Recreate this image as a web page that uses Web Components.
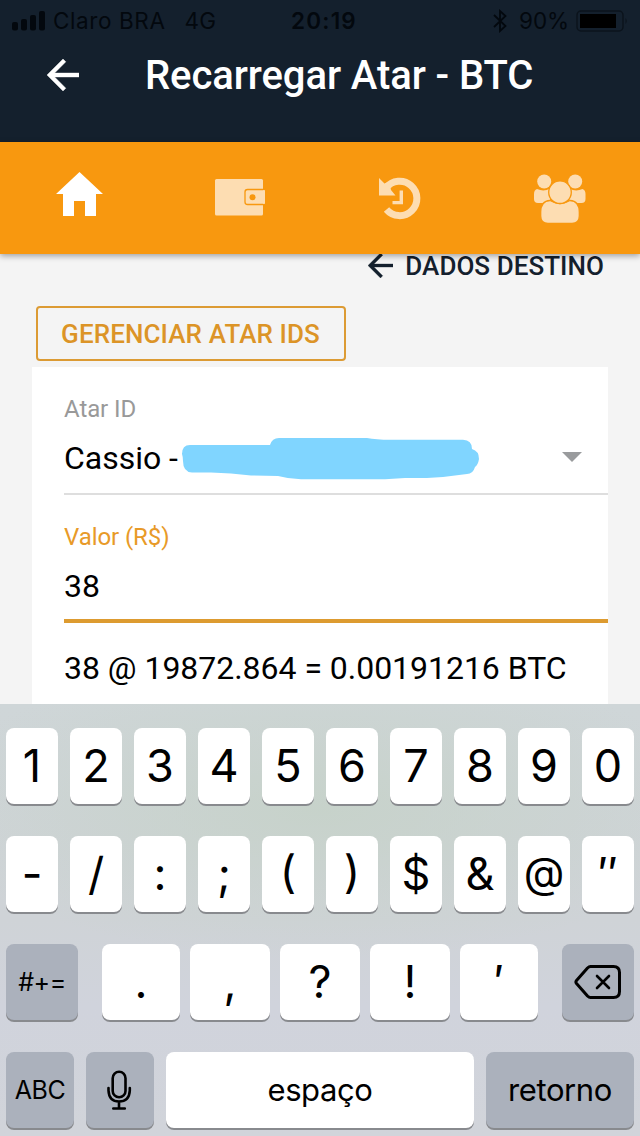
<!DOCTYPE html>
<html lang="pt-BR">
<head>
<meta charset="utf-8">
<title>Recarregar Atar - BTC</title>
<style>
    body {
        margin: 0;
        background: #f4f4f4;
        font-family: Roboto, "Liberation Sans", sans-serif;
    }
</style>
</head>
<body>
<atar-app></atar-app>

<script>
class StatusBar extends HTMLElement {
    constructor() {
        super();
        this.attachShadow({ mode: "open" });
        this.shadowRoot.innerHTML = `
            <style>
                :host {
                    display: grid;
                    grid-template-columns: 1fr auto 1fr;
                    align-items: center;
                    height: 41px;
                    padding: 0 12px 0 12px;
                    box-sizing: border-box;
                    font: 400 22.5px/41px Inter, sans-serif;
                    color: #03080e;
                }
                .left, .right {
                    display: flex;
                    align-items: center;
                }
                .right { justify-content: flex-end; }
                .carrier { margin-left: 8px; letter-spacing: 0.6px; }
                .net { margin-left: 19px; letter-spacing: 0.2px; }
                .time { margin-left: 8px; font-weight: 600; letter-spacing: 1.2px; }
                .level { margin: 0 7px 0 12px; letter-spacing: -0.1px; }
                svg { display: block; }
            </style>
            <div class="left">
                <svg width="33" height="20" viewBox="0 0 33 20" fill="#03080e">
                    <rect x="0" y="11" width="6" height="8.500" rx="2"/>
                    <rect x="9" y="8" width="6" height="11.500" rx="2"/>
                    <rect x="18" y="4" width="6" height="15.500" rx="2"/>
                    <rect x="27" y="0" width="6" height="19.500" rx="2"/>
                </svg>
                <span class="carrier">Claro BRA</span>
                <span class="net">4G</span>
            </div>
            <div class="time">20:19</div>
            <div class="right">
                <svg width="14" height="24" viewBox="0 0 14 24" fill="none" stroke="#03080e" stroke-width="1.800">
                    <path d="M1 6 L12.500 17 L7 22 V2 L12.500 7 L1 18"/>
                </svg>
                <span class="level">90%</span>
                <svg width="52" height="22" viewBox="0 0 52 22">
                    <rect x="1" y="1" width="46" height="20" rx="4" fill="none" stroke="#0b131c" stroke-width="1.500"/>
                    <rect x="4" y="4" width="36" height="14" fill="#000"/>
                    <path d="M49.500 8 v6 q2.500 -3 0 -6z" fill="#0b131c"/>
                </svg>
            </div>
        `;
    }
}
customElements.define("status-bar", StatusBar);

class BackArrow extends HTMLElement {
    constructor() {
        super();
        this.attachShadow({ mode: "open" });
        this.shadowRoot.innerHTML = `
            <style>
                :host { display: block; }
                svg { display: block; width: 100%; height: 100%; }
            </style>
            <svg viewBox="4 4 16 16" fill="currentColor" stroke="currentColor" stroke-width="0.200">
                <path d="M20 11H7.830l5.590-5.590L12 4l-8 8 8 8 1.410-1.410L7.830 13H20v-2z"/>
            </svg>
        `;
    }
}
customElements.define("back-arrow", BackArrow);

class TitleBar extends HTMLElement {
    constructor() {
        super();
        this.attachShadow({ mode: "open" });
        this.shadowRoot.innerHTML = `
            <style>
                :host {
                    display: flex;
                    align-items: center;
                    height: 68px;
                    padding-left: 47px;
                    color: #fff;
                }
                back-arrow { width: 32px; height: 32px; }
                h1 {
                    margin: 2px 0 0 66px;
                    font-size: 40px;
                    font-weight: 500;
                    line-height: 66px;
                    letter-spacing: -0.08px;
                    white-space: nowrap;
                }
            </style>
            <back-arrow></back-arrow>
            <h1><slot></slot></h1>
        `;
    }
}
customElements.define("title-bar", TitleBar);

class TabBar extends HTMLElement {
    constructor() {
        super();
        this.attachShadow({ mode: "open" });
        this.shadowRoot.innerHTML = `
            <style>
                :host {
                    display: flex;
                    position: relative;
                    z-index: 1;
                    height: 112px;
                    background: #f8980f;
                    box-shadow: 0 2px 6px rgba(0, 0, 0, 0.35);
                }
            </style>
            <slot></slot>
        `;
    }
}
customElements.define("tab-bar", TabBar);

const TAB_ICONS = {
    home: `<path d="M27.500 2 L51 24 H44 V46 H33 V31 H22 V46 H11 V24 H4z"/>`,
    wallet: `
        <rect x="3" y="9" width="48" height="36.500" rx="1.500"/>
        <path d="M53 19.500 H35.500 q-2.500 0 -2.500 2.500 V32 q0 2.500 2.500 2.500 H53z" stroke="#f8980f" stroke-width="1.300"/>
        <path d="M51 20.200 h2 v13.600 h-2z"/>
        <circle cx="40.500" cy="27.200" r="3" fill="#f8980f"/>`,
    history: `
        <path d="M14.500 39.500 A17.200 17.200 0 1 0 14 18" fill="none" stroke="currentColor" stroke-width="7"/>
        <path d="M7 8 L12.500 13.500 L17 12 L19 20 L23.500 25.500 H7z"/>
        <path d="M29.300 20.500 V32.600 H20.500" fill="none" stroke="currentColor" stroke-width="3.400"/>`,
    people: `
        <circle cx="12.200" cy="11.500" r="7"/>
        <circle cx="43.200" cy="11.500" r="7"/>
        <path d="M5 19 Q12 22 18 18.500 V33 H6 Q2 33 2 29 V24 Q2 20 5 19z"/>
        <path d="M50.500 19 Q43.500 22 37.500 18.500 V33 H49.500 Q53.500 33 53.500 29 V24 Q53.500 20 50.500 19z"/>
        <path d="M18 30.500 Q28 36.500 38 30.500 Q47.300 31 47.300 42 V46 Q47.300 53.300 40 53.300 H16 Q8.700 53.300 8.700 46 V42 Q8.700 31 18 30.500z" stroke="#f8980f" stroke-width="1.300"/>
        <circle cx="28" cy="22.200" r="11.300" stroke="#f8980f" stroke-width="1.300"/>`
};

class TabItem extends HTMLElement {
    constructor() {
        super();
        this.attachShadow({ mode: "open" });
    }

    connectedCallback() {
        this.shadowRoot.innerHTML = `
            <style>
                :host {
                    display: flex;
                    flex: 1;
                    align-items: center;
                    justify-content: center;
                    color: #fdddb2;
                }
                :host([active]) { color: #fff; }
            </style>
            <svg width="56" height="56" viewBox="0 0 56 56" fill="currentColor">${TAB_ICONS[this.getAttribute("icon")]}</svg>
        `;
    }
}
customElements.define("tab-item", TabItem);

class FormField extends HTMLElement {
    constructor() {
        super();
        this.attachShadow({ mode: "open" });
    }

    connectedCallback() {
        this.shadowRoot.innerHTML = `
            <style>
                :host {
                    display: block;
                    box-sizing: border-box;
                    height: 128px;
                    padding-top: 26px;
                    border-bottom: 2px solid #dedede;
                    color: #000;
                }
                :host([focused]) {
                    border-bottom: 4px solid #dd9b30;
                }
                .label {
                    font-size: 24px;
                    line-height: 32px;
                    letter-spacing: -0.08px;
                    color: #999;
                }
                :host([focused]) .label { color: #e89a28; }
                .value {
                    display: flex;
                    align-items: center;
                    height: 66px;
                    font-size: 32px;
                    letter-spacing: -0.03px;
                    white-space: pre;
                }
            </style>
            <div class="label">${this.getAttribute("label")}</div>
            <div class="value"><slot></slot></div>
        `;
    }
}
customElements.define("form-field", FormField);

class RechargeForm extends HTMLElement {
    constructor() {
        super();
        this.attachShadow({ mode: "open" });
        this.shadowRoot.innerHTML = `
            <style>
                :host {
                    display: block;
                    height: 450px;
                    padding: 0 32px;
                    background: #f4f4f4;
                }
                .next {
                    display: flex;
                    align-items: center;
                    justify-content: flex-end;
                    height: 24px;
                    padding-right: 4px;
                    font-size: 26px;
                    font-weight: 500;
                    line-height: 24px;
                    color: #14202d;
                }
                .next back-arrow {
                    width: 25px;
                    height: 25px;
                    margin: -2px 12px 0 0;
                }
                .next span { margin-top: -1px; letter-spacing: 0.05px; }
                button {
                    display: block;
                    box-sizing: border-box;
                    width: 310px;
                    height: 55px;
                    margin: 28px 0 6px 4px;
                    padding: 0 1px 0 0;
                    border: 2px solid #dc9b34;
                    border-radius: 4px;
                    background: transparent;
                    font: 500 26px/50px Roboto, sans-serif;
                    letter-spacing: 0.1px;
                    color: #dc9427;
                    white-space: nowrap;
                }
                .card {
                    height: 337px;
                    padding-left: 32px;
                    background: #fff;
                }
                .redacted { margin-left: 3px; }
                .caret { margin: -3px 26px 0 auto; }
                .quote {
                    font-size: 32px;
                    line-height: 40px;
                    padding-top: 25px;
                    letter-spacing: -0.03px;
                    color: #000;
                    white-space: nowrap;
                }
            </style>
            <div class="next"><back-arrow></back-arrow><span>DADOS DESTINO</span></div>
            <button>GERENCIAR ATAR IDS</button>
            <div class="card">
                <form-field label="Atar ID">
                    <span>Cassio -</span>
                    <svg class="redacted" width="299" height="43" viewBox="0 0 299 43" fill="#80d5ff">
                        <path d="M1 17 Q1 8 9 8 L89 8 Q91 1 98 1 L186 1 Q196 3 212 2.800 L282 2.800 Q291 3 291 12 Q298 14 298 22 Q297 28 294 30 Q292 37 286 37 Q266 40 246 41 L224 41 L204 42.300 L120 42.300 Q108 42 97 39 L70 38.500 Q50 36 30 35.500 L11 35.500 Q2 35 2 24 Q2 20 1 17z"/>
                    </svg>
                    <svg class="caret" width="20" height="10" viewBox="0 0 20 10"><path d="M0 0 H20 L10 10z" fill="#999b9d"/></svg>
                </form-field>
                <form-field label="Valor (R$)" focused><span>38</span></form-field>
                <div class="quote">38 @ 19872.864 = 0.00191216 BTC</div>
            </div>
        `;
        // keep the slotted row free of whitespace text nodes
        for (const field of this.shadowRoot.querySelectorAll("form-field")) {
            for (const node of [...field.childNodes]) {
                if (node.nodeType === Node.TEXT_NODE) node.remove();
            }
        }
    }
}
customElements.define("recharge-form", RechargeForm);

class KeyCap extends HTMLElement {
    constructor() {
        super();
        this.attachShadow({ mode: "open" });
        this.shadowRoot.innerHTML = `
            <style>
                :host {
                    display: flex;
                    flex: none;
                    align-items: center;
                    justify-content: center;
                    box-sizing: border-box;
                    width: 52px;
                    height: 76px;
                    border-radius: 8px;
                    background: #fff;
                    box-shadow: 0 2px 0 #888a8e;
                    font: 400 45px/76px Inter, sans-serif;
                    color: #000;
                }
                :host([dark]) { background: #abb1bc; }
                :host([word]) {
                    font-size: 31px;
                    letter-spacing: -0.4px;
                }
                :host([small]) {
                    font-size: 25px;
                    letter-spacing: -0.4px;
                    line-height: 78px;
                }
                :host([raised]) { font-feature-settings: "case"; }
                :host([low]) { padding-top: 4px; }
                :host([at]) { font-size: 42px; padding-top: 5px; }
            </style>
            <slot></slot>
        `;
    }
}
customElements.define("key-cap", KeyCap);

// glyphs that sit differently on the cap than the font's default
const KEY_FLAGS = { "-": "raised low", "(": "raised", ")": "raised", "@": "raised at" };

class SoftKeyboard extends HTMLElement {
    constructor() {
        super();
        this.attachShadow({ mode: "open" });
        const digits = [..."1234567890"].map(k => `<key-cap>${k}</key-cap>`).join("");
        const symbols = ["-", "/", ":", ";", "(", ")", "$", "&amp;", "@", "″"]
            .map(k => `<key-cap ${KEY_FLAGS[k] || ""}>${k}</key-cap>`).join("");
        this.shadowRoot.innerHTML = `
            <style>
                :host {
                    display: flex;
                    flex-direction: column;
                    gap: 32px;
                    box-sizing: border-box;
                    height: 432px;
                    padding: 24px 6px 0;
                    overflow: hidden;
                    background:
                        radial-gradient(ellipse 400px 150px at 320px 105px, rgba(198, 210, 201, 0.9), rgba(198, 210, 201, 0)),
                        linear-gradient(#cfd6d8, #cfd3d7 50%, #d0d3dc 70%, #d1d4da);
                }
                .row { display: flex; gap: 12px; }
                .marks { display: flex; gap: 10px; margin: 0 12px; }
                .wide { width: 80px; }
                .edge { width: 78px; }
                .shift { width: 72px; }
                .mode { width: 68px; }
                .space { width: 308px; }
                .return { width: 148px; }
            </style>
            <div class="row">${digits}</div>
            <div class="row">${symbols}</div>
            <div class="row">
                <key-cap class="shift" dark small>#+=</key-cap>
                <div class="marks">
                    <key-cap class="edge">.</key-cap>
                    <key-cap class="wide">,</key-cap>
                    <key-cap class="wide">?</key-cap>
                    <key-cap class="wide">!</key-cap>
                    <key-cap class="edge">′</key-cap>
                </div>
                <key-cap class="shift" dark>
                    <svg width="48" height="36" viewBox="0 0 48 36" fill="none" stroke="#000" stroke-width="3" stroke-linejoin="round" stroke-linecap="round">
                        <path d="M16.500 2.500 H39.500 Q45.500 2.500 45.500 8.500 V27.500 Q45.500 33.500 39.500 33.500 H16.500 Q15 33.500 13.500 32 L2.500 19.500 Q1.300 18 2.500 16.500 L13.500 4 Q15 2.500 16.500 2.500z"/>
                        <path d="M23 12 L35 24 M35 12 L23 24" stroke-width="2.600"/>
                    </svg>
                </key-cap>
            </div>
            <div class="row">
                <key-cap class="mode" dark small>ABC</key-cap>
                <key-cap class="mode" dark>
                    <svg width="26" height="42" viewBox="0 0 26 42" fill="none" stroke="#000" stroke-width="2.600" stroke-linecap="round">
                        <rect x="5.700" y="2.800" width="12.800" height="25.500" rx="6.400"/>
                        <path d="M1.500 19 V21.500 Q2 32.500 12 32.500 Q22.300 32.500 22.800 21.500 V19 M12 33 V39 M6.300 39.500 H17.800"/>
                    </svg>
                </key-cap>
                <key-cap class="space" word>espaço</key-cap>
                <key-cap class="return" dark word>retorno</key-cap>
            </div>
        `;
    }
}
customElements.define("soft-keyboard", SoftKeyboard);

class AtarApp extends HTMLElement {
    constructor() {
        super();
        this.attachShadow({ mode: "open" });
        this.shadowRoot.innerHTML = `
            <style>
                :host {
                    display: flex;
                    flex-direction: column;
                    width: 640px;
                    height: 1136px;
                }
                header {
                    height: 142px;
                    background: #14202d;
                }
            </style>
            <header>
                <status-bar></status-bar>
                <title-bar>Recarregar Atar - BTC</title-bar>
            </header>
            <tab-bar>
                <tab-item icon="home" active></tab-item>
                <tab-item icon="wallet"></tab-item>
                <tab-item icon="history"></tab-item>
                <tab-item icon="people"></tab-item>
            </tab-bar>
            <recharge-form></recharge-form>
            <soft-keyboard></soft-keyboard>
        `;
    }
}
customElements.define("atar-app", AtarApp);
</script>
</body>
</html>
